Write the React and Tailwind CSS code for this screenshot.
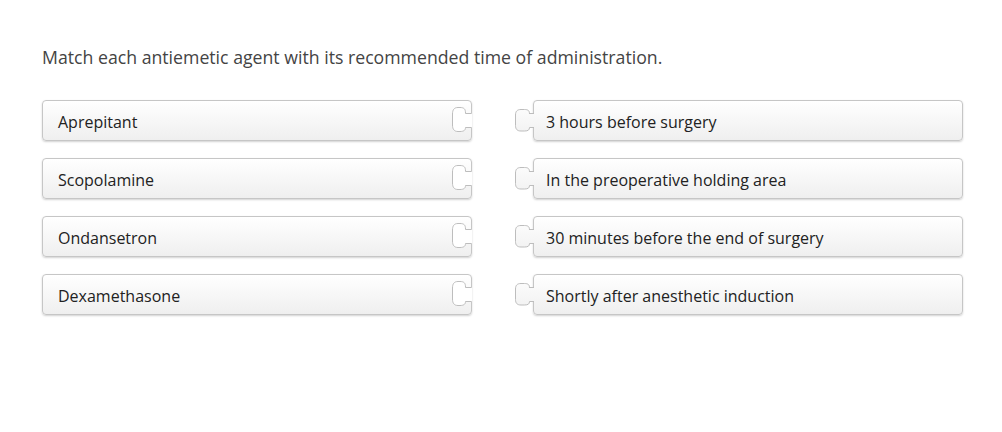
const pairs = [
  ['Aprepitant', '3 hours before surgery'],
  ['Scopolamine', 'In the preoperative holding area'],
  ['Ondansetron', '30 minutes before the end of surgery'],
  ['Dexamethasone', 'Shortly after anesthetic induction'],
]

const SOCKET = 'M22.5 13.5 H16.5 V13 C16.5 9 15 7.5 11 7.5 H9 C5 7.5 3.5 10 3.5 14 V25 C3.5 29 5 31.5 9 31.5 H11 C15 31.5 16.5 30 16.5 27.5'
const KNOB = 'M20 13.5 H15.5 V14 C15.5 10.5 14 9.5 10.5 9.5 H7 C3 9.5 1.5 11.5 1.5 15 V25.5 C1.5 29 3 31 7 31 H10.5 C14 31 15.5 30 15.5 27.5'

const Socket = () => (
  <svg className="absolute right-[-1px] top-[-1px] h-[41px] w-[23px]" viewBox="0 0 23 41">
    <path d={`${SOCKET} V27.5 H23 V13.5 Z`} fill="#ffffff" />
    <path d={`${SOCKET} H22.5`} fill="none" stroke="#bdbdbd" strokeWidth="1" />
  </svg>
)

const Knob = ({ id }) => (
  <svg className="absolute left-[-20px] top-[-1px] h-[41px] w-[21px]" viewBox="0 0 21 41">
    <defs>
      <linearGradient id={id} x1="0" y1="0" x2="0" y2="41" gradientUnits="userSpaceOnUse">
        <stop offset="0" stopColor="#ffffff" />
        <stop offset="1" stopColor="#efefef" />
      </linearGradient>
    </defs>
    <path d={`${KNOB} H21 V13.5 Z`} fill={`url(#${id})`} />
    <path d={`${KNOB} H20`} fill="none" stroke="#bdbdbd" strokeWidth="1" />
  </svg>
)

export default function App() {
  return (
    <div className="min-h-[432px] w-[1002px] bg-white pl-[42px] pt-[43px] font-['Open_Sans',sans-serif]">
      <p className="text-[17.7px] leading-[28px] text-[#444444]">
        Match each antiemetic agent with its recommended time of administration.
      </p>
      <div className="mt-[29px] flex flex-col gap-[17px]">
        {pairs.map(([agent, time], i) => (
          <div key={agent} className="flex gap-[61px]">
            <div className="relative flex h-[41px] w-[430px] items-center rounded-[4px] border border-[#c6c6c6] bg-gradient-to-b from-white to-[#efefef] pl-[15px] pt-[2px] text-[16px] text-[#222222] shadow-[0_1px_2px_rgba(0,0,0,0.18)]">
              {agent}
              <Socket />
            </div>
            <div className="relative flex h-[41px] w-[430px] items-center rounded-[4px] border border-[#c6c6c6] bg-gradient-to-b from-white to-[#efefef] pl-[12px] pt-[2px] text-[16px] text-[#222222] shadow-[0_1px_2px_rgba(0,0,0,0.18)]">
              <Knob id={`knob${i}`} />
              {time}
            </div>
          </div>
        ))}
      </div>
    </div>
  )
}
